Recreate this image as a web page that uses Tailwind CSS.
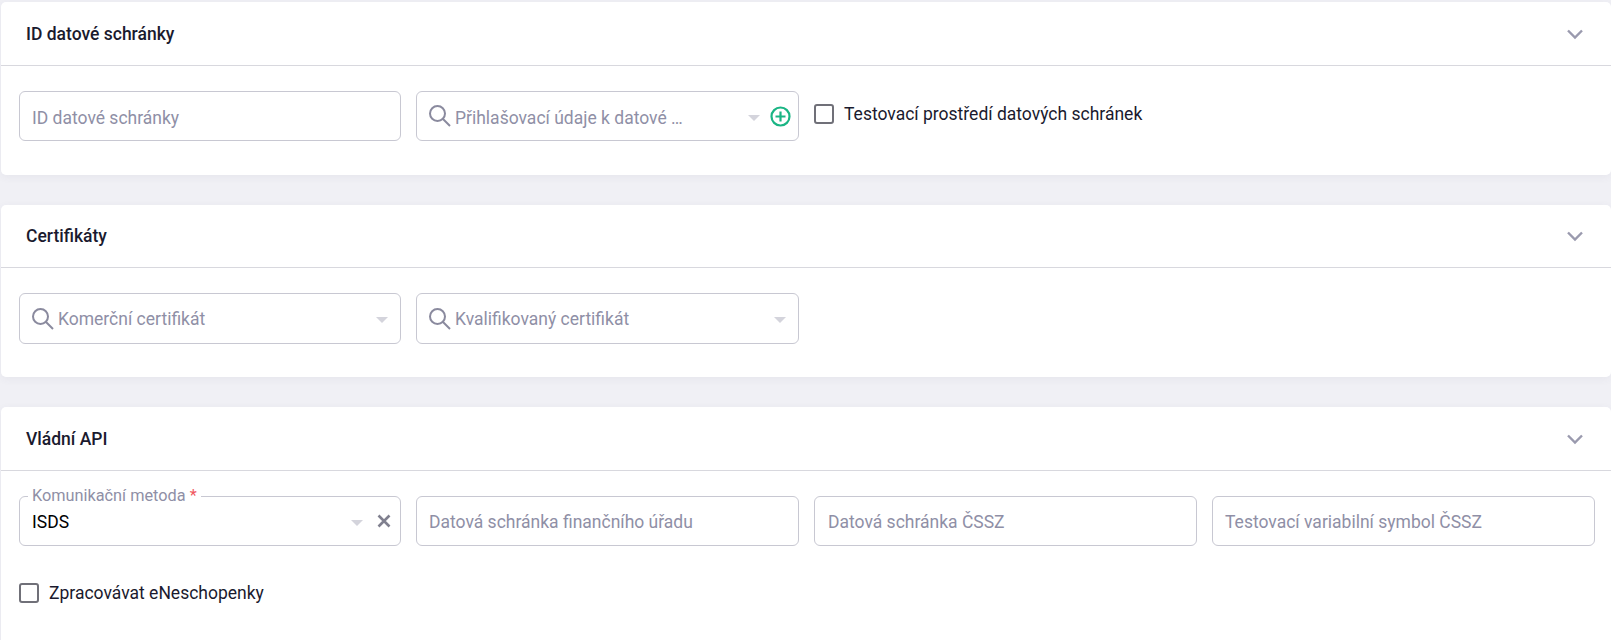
<!DOCTYPE html>
<html>

<head>
    <title>Nastavení</title>
    <script src="https://cdn.jsdelivr.net/npm/@tailwindcss/browser@4"></script>
</head>

<body class="bg-[#f0f0f5] h-screen overflow-hidden font-['Roboto',sans-serif] text-[17.5px] text-[#1a1a2e]">
    <div class="pl-[1px] pt-[2px] flex flex-col gap-[30px]">

        <section class="bg-white rounded-[5px] shadow-[0_2px_8px_rgba(60,60,100,0.06)] h-[173px]">
            <header class="h-[64px] border-b border-[#d8d8de] pl-[25px] pr-[29px] flex items-center justify-between">
                <h2 class="font-medium text-[17.5px] pt-[1px]">ID datové schránky</h2>
                <svg class="w-[18px] h-[12px] mr-[-2px]" viewBox="0 0 18 12" fill="none" stroke="#9a9aae" stroke-width="2.4"><path d="M2 2.500l7 7 7-7"/></svg>
            </header>
            <div class="grid grid-cols-[382px_383px_383px_383px] gap-[15px] pl-[18px] pt-[25px]">
                <div class="h-[50px] border border-[#c8c8d2] rounded-[6px] px-[12px] pt-[4px] flex items-center text-[#8f8fa6]">ID datové schránky</div>
                <div class="h-[50px] border border-[#c8c8d2] rounded-[6px] pl-[12px] pr-[7px] flex items-center text-[#8f8fa6]">
                    <svg class="w-[22px] h-[22px] shrink-0 mr-[4px]" viewBox="0 0 22 22" fill="none" stroke="#8a8a9e" stroke-width="2"><circle cx="8.500" cy="8.500" r="7.500"/><path d="M14 14l7 7"/></svg>
                    <span class="flex-1 truncate pt-[4px]">Přihlašovací údaje k datové …</span>
                    <span class="w-0 h-0 border-x-[6px] border-x-transparent border-t-[6px] border-t-[#d4d4dc] mr-[10px] mt-[3px]"></span>
                    <svg class="w-[21px] h-[21px] shrink-0" viewBox="0 0 21 21" fill="none" stroke="#1ab584" stroke-width="2.2"><circle cx="10.500" cy="10.500" r="9"/><path d="M10.500 5.500v10M5.500 10.500h10"/></svg>
                </div>
                <label class="col-span-2 h-[46px] flex items-center gap-[10px]">
                    <span class="w-[20px] h-[20px] border-2 border-[#707078] rounded-[3px]"></span>
                    <span class="pt-[1px]">Testovací prostředí datových schránek</span>
                </label>
            </div>
        </section>

        <section class="bg-white rounded-[5px] shadow-[0_2px_8px_rgba(60,60,100,0.06)] h-[172px]">
            <header class="h-[63px] border-b border-[#d8d8de] pl-[25px] pr-[29px] flex items-center justify-between">
                <h2 class="font-medium text-[17.5px]">Certifikáty</h2>
                <svg class="w-[18px] h-[12px] mr-[-2px]" viewBox="0 0 18 12" fill="none" stroke="#9a9aae" stroke-width="2.4"><path d="M2 2.500l7 7 7-7"/></svg>
            </header>
            <div class="grid grid-cols-[382px_383px_383px_383px] gap-[15px] pl-[18px] pt-[25px]">
                <div class="h-[51px] border border-[#c8c8d2] rounded-[6px] pl-[12px] pr-[12px] flex items-center text-[#8f8fa6]">
                    <svg class="w-[22px] h-[22px] shrink-0 mr-[4px]" viewBox="0 0 22 22" fill="none" stroke="#8a8a9e" stroke-width="2"><circle cx="8.500" cy="8.500" r="7.500"/><path d="M14 14l7 7"/></svg>
                    <span class="flex-1 truncate pt-[2px]">Komerční certifikát</span>
                    <span class="w-0 h-0 border-x-[6px] border-x-transparent border-t-[6px] border-t-[#d4d4dc] mt-[3px]"></span>
                </div>
                <div class="h-[51px] border border-[#c8c8d2] rounded-[6px] pl-[12px] pr-[12px] flex items-center text-[#8f8fa6]">
                    <svg class="w-[22px] h-[22px] shrink-0 mr-[4px]" viewBox="0 0 22 22" fill="none" stroke="#8a8a9e" stroke-width="2"><circle cx="8.500" cy="8.500" r="7.500"/><path d="M14 14l7 7"/></svg>
                    <span class="flex-1 truncate pt-[2px]">Kvalifikovaný certifikát</span>
                    <span class="w-0 h-0 border-x-[6px] border-x-transparent border-t-[6px] border-t-[#d4d4dc] mt-[3px]"></span>
                </div>
            </div>
        </section>

        <section class="bg-white rounded-[5px] shadow-[0_2px_8px_rgba(60,60,100,0.06)] h-[240px]">
            <header class="h-[64px] border-b border-[#d8d8de] pl-[25px] pr-[29px] flex items-center justify-between">
                <h2 class="font-medium text-[17.5px] pt-[2px]">Vládní API</h2>
                <svg class="w-[18px] h-[12px] mr-[-2px]" viewBox="0 0 18 12" fill="none" stroke="#9a9aae" stroke-width="2.4"><path d="M2 2.500l7 7 7-7"/></svg>
            </header>
            <div class="grid grid-cols-[382px_383px_383px_383px] gap-[15px] pl-[18px] pt-[25px]">
                <div class="relative h-[50px] border border-[#c8c8d2] rounded-[6px] pl-[12px] pr-[9px] flex items-center text-black">
                    <span class="absolute left-[8px] top-[-10px] bg-white px-[4px] text-[16.300px] leading-[18px] text-[#8f8fa6]">Komunikační metoda <span class="text-[#f0575f]">*</span></span>
                    <span class="flex-1 pt-[3px]">ISDS</span>
                    <span class="w-0 h-0 border-x-[6px] border-x-transparent border-t-[6px] border-t-[#d4d4dc] mr-[14px] mt-[3px]"></span>
                    <svg class="w-[14px] h-[14px] shrink-0" viewBox="0 0 14 14" fill="none" stroke="#80808f" stroke-width="2.600"><path d="M1.500 1.500l11 11M12.500 1.500l-11 11"/></svg>
                </div>
                <div class="h-[50px] border border-[#c8c8d2] rounded-[6px] px-[12px] pt-[2px] flex items-center text-[#8f8fa6]">Datová schránka finančního úřadu</div>
                <div class="h-[50px] border border-[#c8c8d2] rounded-[6px] px-[13px] pt-[2px] flex items-center text-[#8f8fa6]">Datová schránka ČSSZ</div>
                <div class="h-[50px] border border-[#c8c8d2] rounded-[6px] px-[12px] pt-[2px] flex items-center text-[#8f8fa6]">Testovací variabilní symbol ČSSZ</div>
            </div>
            <label class="flex items-center gap-[10px] pl-[18px] mt-[34px]">
                <span class="w-[20px] h-[20px] border-2 border-[#707078] rounded-[3px]"></span>
                <span>Zpracovávat eNeschopenky</span>
            </label>
        </section>
    </div>
</body>

</html>
